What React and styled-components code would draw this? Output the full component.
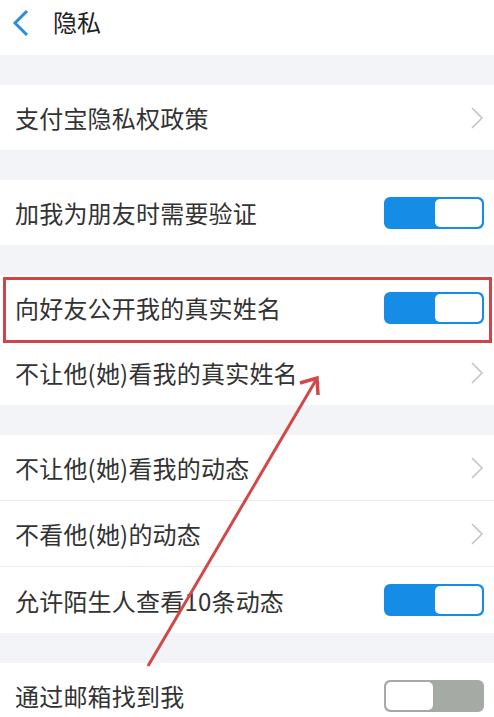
import styled, { createGlobalStyle } from "styled-components";

const GlobalStyle = createGlobalStyle`
	body {
		margin: 0;
		background: #f3f4f8;
		font-family: "Noto Sans CJK SC", "Noto Sans", sans-serif;
	}
`;

const App = () => {
	return (
		<Page>
			<GlobalStyle />
			<Header>
				<BackIcon width="20" height="28" viewBox="0 0 20 28">
					<path d="M16 2 L4 14 L16 26" fill="none" stroke="#2a8ee0" strokeWidth="3" />
				</BackIcon>
				<Title>隐私</Title>
			</Header>
			<Gap />
			<Group>
				<Row>
					<Label>支付宝隐私权政策</Label>
					<Chevron />
				</Row>
			</Group>
			<Gap />
			<Group>
				<Row>
					<Label>加我为朋友时需要验证</Label>
					<Toggle on />
				</Row>
			</Group>
			<Gap />
			<Group>
				<Row highlighted>
					<Label>向好友公开我的真实姓名</Label>
					<Toggle on />
				</Row>
				<Row>
					<Label>不让他(她)看我的真实姓名</Label>
					<Chevron />
				</Row>
			</Group>
			<Gap />
			<Group>
				<Row divided>
					<Label>不让他(她)看我的动态</Label>
					<Chevron />
				</Row>
				<Row divided>
					<Label>不看他(她)的动态</Label>
					<Chevron />
				</Row>
				<Row tall>
					<Label>允许陌生人查看10条动态</Label>
					<Toggle on />
				</Row>
			</Group>
			<Gap />
			<Group>
				<Row>
					<Label>通过邮箱找到我</Label>
					<Toggle />
				</Row>
			</Group>
			<Arrow width="494" height="717" viewBox="0 0 494 717">
				<line x1="148" y1="666" x2="316" y2="380" stroke="#d24848" strokeWidth="3" />
				<path d="M300 383 L317 378 L318 395" fill="none" stroke="#d24848" strokeWidth="3.5" />
			</Arrow>
		</Page>
	);
};

const Chevron = () => (
	<svg width="14" height="24" viewBox="0 0 14 24">
		<path d="M2 2 L12 12 L2 22" fill="none" stroke="#c4c4c4" strokeWidth="1.6" />
	</svg>
);

const Toggle = ({ on }) => (
	<Track on={on ? 1 : 0}>
		<Knob on={on ? 1 : 0} />
	</Track>
);

export default App;

const Page = styled.div`
	position: relative;
	width: 494px;
	height: 717px;
	overflow: hidden;
	background: #f3f4f8;
`;

const Header = styled.div`
	height: 55px;
	background: #fff;
	display: flex;
	align-items: center;
	padding-left: 11px;
	gap: 22px;
`;

const BackIcon = styled.svg`
	display: block;
	margin-bottom: 10px;
`;

const Title = styled.div`
	font-size: 24px;
	color: #222;
	margin-bottom: 12px;
`;

const Gap = styled.div`
	height: 30px;
`;

const Group = styled.div`
	background: #fff;
`;

const Row = styled.div`
	position: relative;
	height: ${(p) => (p.tall ? "66px" : "65px")};
	display: flex;
	align-items: center;
	justify-content: space-between;
	padding: 0 10px 0 15px;
	border-bottom: ${(p) => (p.divided ? "1px solid #ececec" : "none")};
	${(p) =>
		p.highlighted &&
		`
		&::after {
			content: "";
			position: absolute;
			left: 3px;
			right: 2px;
			top: 2px;
			bottom: -3px;
			border: 3px solid #cf4444;
			pointer-events: none;
		}
	`}
`;

const Label = styled.div`
	font-size: 24px;
	color: #333;
	letter-spacing: 0.2px;
`;

const Track = styled.div`
	width: 100px;
	height: 32px;
	box-sizing: border-box;
	border-radius: 6px;
	display: flex;
	justify-content: ${(p) => (p.on ? "flex-end" : "flex-start")};
	background: ${(p) => (p.on ? "#158ce6" : "#a6aaa4")};
	border: 2px solid ${(p) => (p.on ? "#158ce6" : "#a6aaa4")};
`;

const Knob = styled.div`
	width: 47px;
	height: 100%;
	background: #fff;
	border-radius: 5px;
`;

const Arrow = styled.svg`
	position: absolute;
	left: 0;
	top: 0;
	pointer-events: none;
`;
